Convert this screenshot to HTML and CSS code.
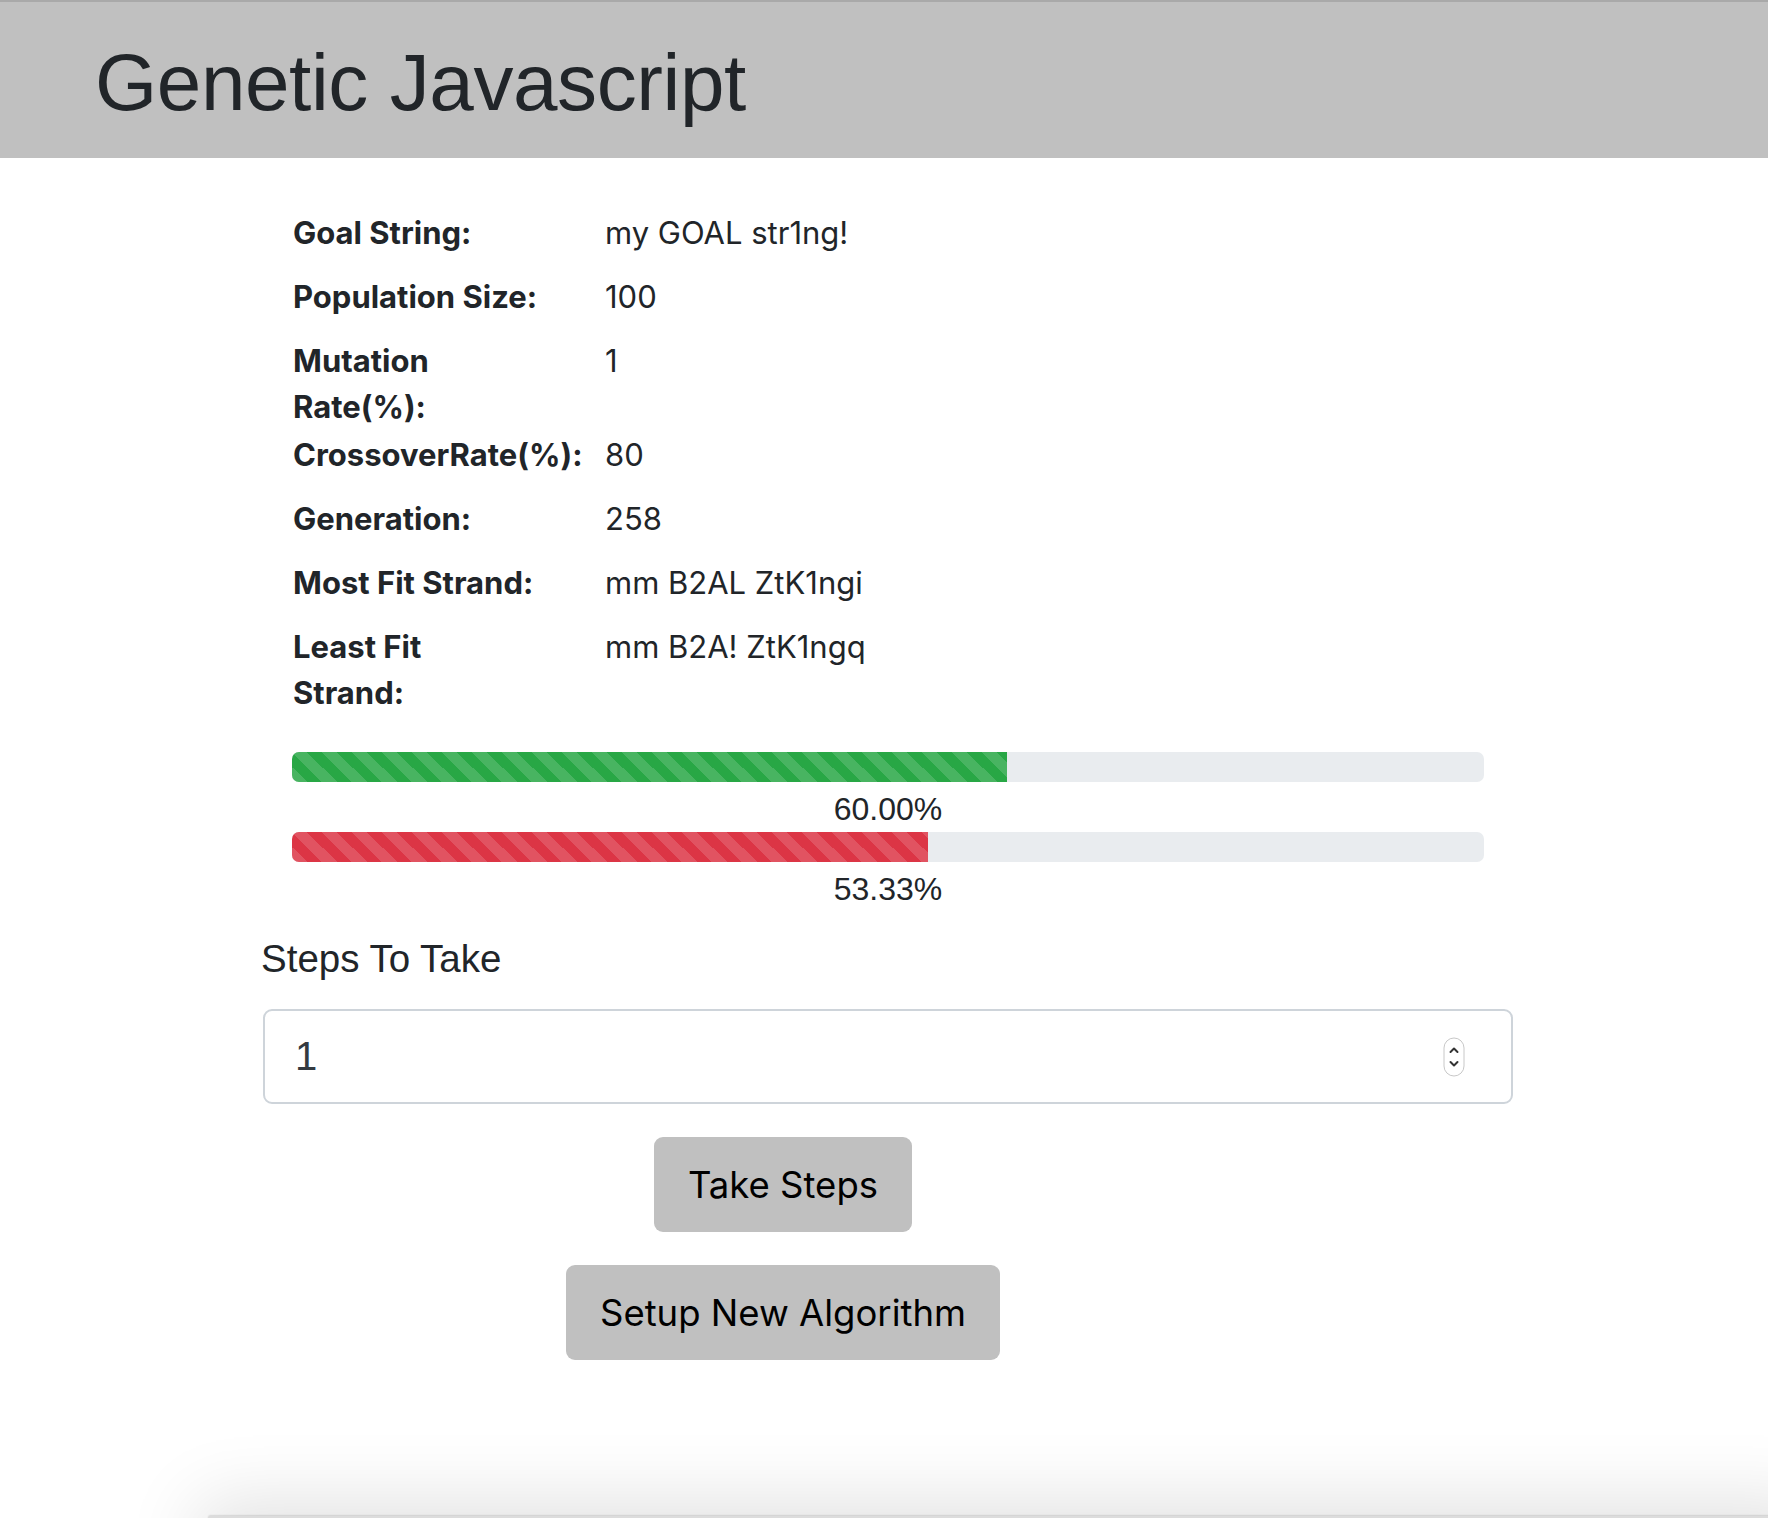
FILE: index.html
```html
<!DOCTYPE html>
<html lang="en">
<head>
<meta charset="utf-8">
<title>Genetic Javascript</title>
<link rel="stylesheet" href="styles.css">
</head>
<body>
<header class="topbar">
  <h1 class="title">Genetic Javascript</h1>
</header>
<main class="container">
  <section class="stats">
    <div class="row"><div class="label">Goal String:</div><div class="value">my GOAL str1ng!</div></div>
    <div class="row"><div class="label">Population Size:</div><div class="value">100</div></div>
    <div class="row tight"><div class="label">Mutation<br>Rate(%):</div><div class="value">1</div></div>
    <div class="row"><div class="label">CrossoverRate(%):</div><div class="value">80</div></div>
    <div class="row"><div class="label">Generation:</div><div class="value">258</div></div>
    <div class="row"><div class="label">Most Fit Strand:</div><div class="value">mm B2AL ZtK1ngi</div></div>
    <div class="row last"><div class="label">Least Fit<br>Strand:</div><div class="value">mm B2A! ZtK1ngq</div></div>
  </section>
  <section class="bars">
    <div class="progress"><div class="bar green" style="width:60%"></div></div>
    <div class="pct">60.00%</div>
    <div class="progress"><div class="bar red" style="width:53.33%"></div></div>
    <div class="pct">53.33%</div>
  </section>
  <section class="steps">
    <label class="steps-label" for="steps">Steps To Take</label>
    <div class="input-box">
      <span class="input-value">1</span>
      <svg class="spinner" width="22" height="40" viewBox="0 0 22 40">
        <rect x="1" y="1" width="20" height="38" rx="10" fill="#fff" stroke="#c8c8c8" stroke-width="1"/>
        <path d="M7.5 15 L11 11.5 L14.5 15" fill="none" stroke="#333" stroke-width="2" stroke-linecap="round" stroke-linejoin="round"/>
        <path d="M7.5 25 L11 28.5 L14.5 25" fill="none" stroke="#333" stroke-width="2" stroke-linecap="round" stroke-linejoin="round"/>
      </svg>
    </div>
  </section>
  <div class="actions">
    <button class="btn btn-take">Take Steps</button>
    <button class="btn btn-setup">Setup New Algorithm</button>
  </div>
</main>
<div class="shadow-window"></div>
</body>
</html>
```

FILE: styles.css
```css
html, body {
  margin: 0;
  padding: 0;
  background: #fff;
  height: 1518px;
  overflow: hidden;
  position: relative;
}

body {
  color: #212529;
  font-family: Inter, "Noto Sans", sans-serif;
}

.topbar {
  border-top: 2px solid #a9a9a9;
  background: #c0c0c0;
  height: 158px;
  box-sizing: border-box;
  display: flex;
  align-items: center;
  padding-left: 95px;
  padding-top: 6px;
}

.title {
  margin: 0;
  font-family: "Liberation Sans", Arial, sans-serif;
  font-weight: 400;
  font-size: 80px;
  line-height: 1;
  color: #212529;
  letter-spacing: -0.4px;
}

.container {
  margin-left: 263px;
  width: 1250px;
}

.stats {
  padding-left: 30px;
  padding-top: 52px;
}

.row {
  display: flex;
  font-size: 31px;
  line-height: 46px;
  margin-bottom: 18px;
}

.row.tight {
  margin-bottom: 2px;
}

.row.last {
  margin-bottom: 0;
}

.label {
  width: 250px;
  flex: none;
  margin-right: 62px;
  font-weight: 700;
  white-space: nowrap;
}

.value {
  font-weight: 400;
}

.bars {
  padding: 0 29px;
  margin-top: 36px;
}

.progress {
  height: 30px;
  background: #e9ecef;
  border-radius: 7px;
  overflow: hidden;
  display: flex;
}

.bar {
  height: 100%;
  background-image: linear-gradient(45deg, rgba(255,255,255,.15) 25%, transparent 25%, transparent 50%, rgba(255,255,255,.15) 50%, rgba(255,255,255,.15) 75%, transparent 75%, transparent);
  background-size: 30px 30px;
}

.bar.green { background-color: #28a745; }
.bar.red { background-color: #dc3545; }

.pct {
  text-align: center;
  font-family: "Liberation Sans", Arial, sans-serif;
  font-size: 32px;
  height: 50px;
  box-sizing: border-box;
  padding-top: 4px;
  line-height: 46px;
}

.steps {
  margin-top: 23px;
}

.steps-label {
  display: block;
  font-family: "Liberation Sans", Arial, sans-serif;
  font-size: 38.5px;
  line-height: 48px;
  margin-bottom: 26px;
  margin-left: -2px;
}

.input-box {
  height: 91px;
  border: 2px solid #ced4da;
  border-radius: 9px;
  display: flex;
  align-items: center;
  justify-content: space-between;
  padding: 0 46px 0 30px;
}

.input-value {
  font-family: "Liberation Sans", Arial, sans-serif;
  font-size: 40px;
  color: #343a40;
}

.actions {
  display: flex;
  flex-direction: column;
  align-items: center;
  gap: 33px;
  margin-top: 33px;
  width: 1040px;
}

.btn {
  border: none;
  background: #c0c0c0;
  border-radius: 9px;
  height: 95px;
  padding: 0 34px;
  font-family: Inter, "Noto Sans", sans-serif;
  font-size: 36.5px;
  color: #000;
}

.shadow-window {
  position: absolute;
  left: 209px;
  right: -40px;
  top: 1516px;
  height: 300px;
  background: #dcdcdc;
  box-shadow: 0 -4px 70px 10px rgba(0,0,0,0.12), 0 0 2px rgba(0,0,0,0.3);
}
```
